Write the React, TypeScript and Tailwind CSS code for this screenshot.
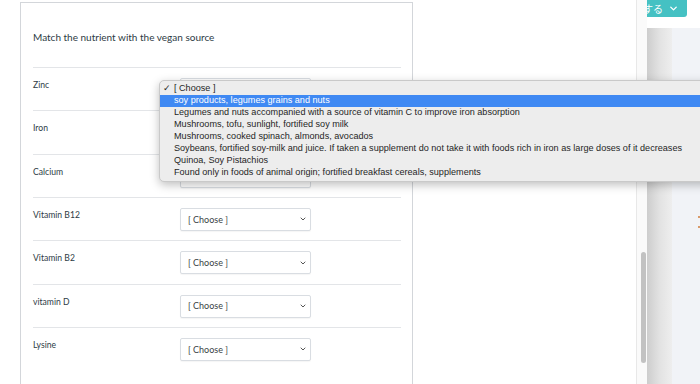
import { ChevronDown } from 'lucide-react'

const ROWS = ['Zinc', 'Iron', 'Calcium', 'Vitamin B12', 'Vitamin B2', 'vitamin D', 'Lysine']

const OPTIONS = [
  'soy products, legumes grains and nuts',
  'Legumes and nuts accompanied with a source of vitamin C to improve iron absorption',
  'Mushrooms, tofu, sunlight, fortified soy milk',
  'Mushrooms, cooked spinach, almonds, avocados',
  'Soybeans, fortified soy-milk and juice. If taken a supplement do not take it with foods rich in iron as large doses of it decreases',
  'Quinoa, Soy Pistachios',
  'Found only in foods of animal origin; fortified breakfast cereals, supplements'
]

function FakeSelect() {
  return (
    <div className="w-[131px] h-[23px] border border-[#d9dde2] rounded-[2px] bg-white flex items-center justify-between pl-[7px] pr-[3px] shadow-[0_1px_1px_rgba(0,0,0,0.04)]">
      <span className="text-[9px] text-[#3a3f44]">[ Choose ]</span>
      <ChevronDown size={8} strokeWidth={3} className="text-[#555]" />
    </div>
  )
}

export default function App() {
  return (
    <div className="relative w-[700px] h-[384px] overflow-hidden bg-white flex font-['Lato',sans-serif]">
      {/* quiz area */}
      <div className="w-[636px] h-full">
        <div className="ml-[20px] mt-[2px] w-[393px] h-[400px] border-l border-r border-t border-[#d3d6da] pl-[12px] pr-[11px]">
          <div className="h-[64px] pt-[27px] text-[10px] text-[#2d3b45]">Match the nutrient with the vegan source</div>
          {ROWS.map((label) => (
            <div key={label} className="h-[43.33px] border-t border-[#e3e5e8] flex items-start">
              <div className="w-[147px] pt-[11px] text-[8.6px] text-[#2d3b45]">{label}</div>
              <div className="pt-[10px]">
                <FakeSelect />
              </div>
            </div>
          ))}
        </div>
      </div>

      {/* scrollbar */}
      <div className="w-[11px] h-full border-l border-[#e8e8e8] bg-[#fafafa] pt-[252px] pl-[4px]">
        <div className="w-[5px] h-[111px] rounded-full bg-[#c2c2c2]" />
      </div>

      {/* side strip */}
      <div className="flex-1 h-full flex flex-col">
        <div className="h-[28px] bg-white">
          <div className="w-[40px] h-[17px] bg-[#45c1c3] rounded-br-[3px] overflow-hidden flex items-center text-white text-[10px] font-['Noto_Sans_CJK_JP',sans-serif]">
            <span className="-ml-[4px]">する</span>
            <ChevronDown size={11} strokeWidth={3} className="ml-[5px]" />
          </div>
        </div>
        <div className="flex-1 flex">
          <div className="w-[25px] bg-linear-to-r from-[#cdcdcd] via-[#e2e2e2] to-[#eeeeee]" />
          <div className="flex-1 bg-[#f1f3f7] flex flex-col items-end pt-[100px] gap-[84px]">
            <div className="w-[2px] h-[4px] bg-[#d99a6a]" />
            <div className="w-[2px] h-[12px] border-y-[2px] border-[#d99a6a] bg-transparent" />
          </div>
        </div>
      </div>

      {/* open native select popup */}
      <div className="absolute left-[159px] top-[80px] w-[570px] h-[102px] bg-[#ededed] border border-[#c9c9c9] rounded-[5px] shadow-[0_3px_10px_rgba(0,0,0,0.25)] pt-[2px] font-['Liberation_Sans',sans-serif] text-[9.1px] text-[#1f1f1f]">
        <div className="h-[12px] flex items-center">
          <span className="w-[14px] pl-[3px]">✓</span>
          <span>[ Choose ]</span>
        </div>
        {OPTIONS.map((opt, i) => (
          <div
            key={i}
            className={`h-[12px] flex items-center pl-[14px] whitespace-nowrap ${
              i === 0 ? 'bg-[#3f89f3] text-white' : ''
            }`}
          >
            {opt}
          </div>
        ))}
      </div>
    </div>
  )
}
